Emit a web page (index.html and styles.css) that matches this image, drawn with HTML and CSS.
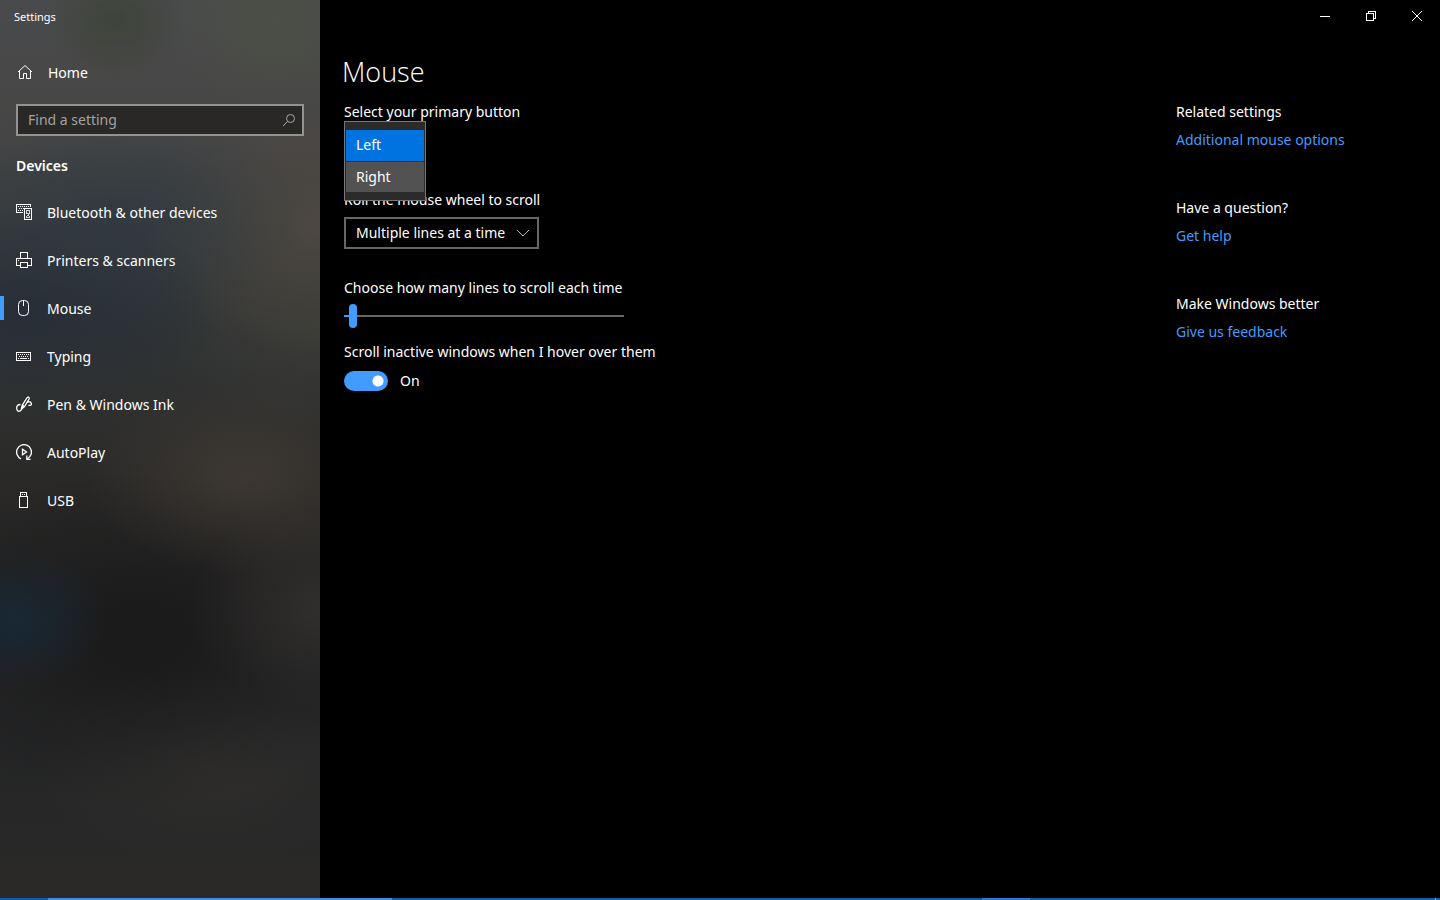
FILE: index.html
```html
<!DOCTYPE html>
<html lang="en">
<head>
<meta charset="utf-8">
<title>Settings</title>
<link rel="stylesheet" href="styles.css">
</head>
<body>
<div class="window">
  <div class="sidebar">
    <header class="app-title">Settings</header>
    <a class="nav-item home" href="#home">
      <svg class="icon" width="16" height="16" viewBox="0 0 16 16"><path d="M1 8 8 1.500 15 8M2.500 7v7.500h4v-5h3v5h4V7"/></svg>
      <span>Home</span>
    </a>
    <form class="search">
      <input class="search-input" type="text" placeholder="Find a setting" aria-label="Find a setting">
      <button class="search-button" type="button" aria-label="Search">
        <svg width="14" height="14" viewBox="0 0 14 14"><circle cx="8.500" cy="5.500" r="4"/><path d="M5.500 8.500 1 13"/></svg>
      </button>
    </form>
    <h2 class="section-title">Devices</h2>
    <nav class="nav">
      <a class="nav-item" href="#bluetooth">
        <svg class="icon crisp" width="16" height="16" viewBox="0 0 16 16"><path d="M7 8.500H.5v-8h14V3M8.500 4.500h7v11h-7z"/><path d="M2 2.500h11M3 4.500h5M2 6.500h1M4 6.500h3" stroke-dasharray="1 1"/><path d="M10.500 6.500h3v3h-3zM11 11.500h2M10.500 12v2M13.500 12v2M11 13.500h2M12 10v1" opacity=".8"/></svg>
        <span>Bluetooth &amp; other devices</span>
      </a>
      <a class="nav-item" href="#printers">
        <svg class="icon crisp" width="16" height="16" viewBox="0 0 16 16"><path d="M4.500 6V.5h7V6M4.500 13.500h-4v-7h15v7h-4M4.500 10.500h7v5h-7zM2 8.500h1"/></svg>
        <span>Printers &amp; scanners</span>
      </a>
      <a class="nav-item current" href="#mouse" aria-current="page">
        <svg class="icon" width="16" height="16" viewBox="0 0 16 16"><rect x="2.500" y=".5" width="10" height="15" rx="4"/><path d="M7.500 1v5"/></svg>
        <span>Mouse</span>
      </a>
      <a class="nav-item" href="#typing">
        <svg class="icon crisp" width="16" height="16" viewBox="0 0 16 16"><path d="M.5 4.500h14v8H.5zM4 10.500h7M2 10.500h1M12 10.500h1"/><path d="M2 6.500h11M3 8.500h10" stroke-dasharray="1 1"/></svg>
        <span>Typing</span>
      </a>
      <a class="nav-item" href="#pen">
        <svg class="icon bold" width="16" height="16" viewBox="0 0 16 16"><path d="M4.500 8.500C2 8.300.5 10 .7 12.500c.1 2 1.300 3 2.800 2.700C6 14.800 6 12 7.500 9M5.300 13.300l.9-4L10.800 2C11.800.5 13.800 1 13 3L8.500 10.500zM11 6.500c2-1.300 4.300-.5 4.400 1.300.1 1.700-1.900 2-2.900 1.200"/></svg>
        <span>Pen &amp; Windows Ink</span>
      </a>
      <a class="nav-item" href="#autoplay">
        <svg class="icon bold" width="16" height="16" viewBox="0 0 16 16"><path d="M5 14.800A7.400 7.400 0 1 1 15 10.500C14.300 12.500 13 13.800 11 15M10.800 11.500V15.300H14.500M6.500 5.200v5.600l4-2.800z"/></svg>
        <span>AutoPlay</span>
      </a>
      <a class="nav-item" href="#usb">
        <svg class="icon crisp" width="16" height="16" viewBox="0 0 16 16"><path d="M3.500 4.500h8v11h-8zM4.500 4V.5h6V4M6 2.500h1M8 2.500h1"/></svg>
        <span>USB</span>
      </a>
    </nav>
  </div>
  <div class="page">
    <div class="caption-buttons">
      <button type="button" aria-label="Minimize"><svg class="crisp" width="10" height="10" viewBox="0 0 10 10"><path d="M0 5.500h10"/></svg></button>
      <button type="button" aria-label="Restore"><svg class="crisp" width="10" height="10" viewBox="0 0 10 10"><path d="M.5 2.500h7v7h-7zM2.500 2V.5h7v7H8"/></svg></button>
      <button type="button" aria-label="Close"><svg width="10" height="10" viewBox="0 0 10 10"><path d="M0 0 10 10M10 0 0 10"/></svg></button>
    </div>
    <h1 class="page-title">Mouse</h1>
    <div class="columns">
      <main class="settings">
        <div class="field">
          <span id="primary-label">Select your primary button</span>
          <div class="picker">
            <div class="picker-list" role="listbox" aria-labelledby="primary-label">
              <button class="option selected" type="button" role="option" aria-selected="true">Left</button>
              <button class="option" type="button" role="option" aria-selected="false">Right</button>
            </div>
          </div>
        </div>
        <div class="field">
          <label for="wheel">Roll the mouse wheel to scroll</label>
          <div class="select-box">
            <select id="wheel"><option>Multiple lines at a time</option><option>One screen at a time</option></select>
            <svg class="chevron" width="12" height="8" viewBox="0 0 12 8"><path d="M0 1 6 7l6-6"/></svg>
          </div>
        </div>
        <div class="field compact">
          <label for="lines">Choose how many lines to scroll each time</label>
          <input id="lines" class="slider" type="range" min="1" max="100" value="3">
        </div>
        <div class="field">
          <label for="inactive">Scroll inactive windows when I hover over them</label>
          <div class="toggle-row">
            <input id="inactive" class="toggle" type="checkbox" role="switch" checked>
            <span>On</span>
          </div>
        </div>
      </main>
      <aside class="related">
        <section><h3>Related settings</h3><a href="#options">Additional mouse options</a></section>
        <section><h3>Have a question?</h3><a href="#help">Get help</a></section>
        <section><h3>Make Windows better</h3><a href="#feedback">Give us feedback</a></section>
      </aside>
    </div>
  </div>
</div>
<div class="taskbar-edge"></div>
</body>
</html>
```
FILE: styles.css
```css
* { box-sizing: border-box; }

body {
  margin: 0;
  min-height: 100vh;
  display: flex;
  flex-direction: column;
  background: #000;
  color: #fff;
  font: 14px/20px "Noto Sans", "Open Sans", sans-serif;
}

a { color: #429cff; text-decoration: none; }
h1, h2, h3 { margin: 0; font-size: inherit; font-weight: 400; }
button, input, select { margin: 0; font: inherit; color: inherit; }
svg { display: block; fill: none; stroke: currentColor; }
.crisp { shape-rendering: crispEdges; }
.bold { stroke-width: 1.3; }

.window { flex: 1; display: flex; }

.sidebar {
  width: 320px;
  flex: none;
  background:
    radial-gradient(70px 60px at 115px 20px, #39412fa0, #39412f00),
    radial-gradient(110px 90px at 275px 20px, #4f554180, #4f554100),
    radial-gradient(200px 120px at 110px 215px, #2b394390, #2b394300),
    radial-gradient(170px 130px at 310px 225px, #544d44b0, #544d4400),
    radial-gradient(200px 100px at 30px 310px, #222b38c0, #222b3800),
    radial-gradient(150px 100px at 320px 330px, #3e3e38a0, #3e3e3800),
    radial-gradient(160px 100px at 245px 475px, #453e37b0, #453e3700),
    radial-gradient(90px 70px at 15px 618px, #182a38e0, #182a3800),
    radial-gradient(130px 100px at 320px 610px, #383532b0, #38353200),
    radial-gradient(230px 170px at 140px 640px, #181717c0, #18171700),
    radial-gradient(180px 100px at 210px 765px, #343230b0, #34323000),
    linear-gradient(#494a4c, #474645 16%, #3a3b3b 25%, #313333 40%, #292827 55%, #222223 68%, #242526 82%, #2a2928);
}

.app-title { padding: 7px 14px 5px; font-size: 11px; }

.nav-item {
  display: flex;
  align-items: center;
  gap: 15px;
  height: 48px;
  padding: 0 16px;
  color: #fff;
}
.icon { margin-bottom: 2px; }
.home { margin: 17px 0 7px; padding-left: 17px; }
.current { background: linear-gradient(#429cff, #429cff) 0 11px / 4px 24px no-repeat; }

.search {
  display: flex;
  height: 32px;
  margin: 0 16px;
  border: 2px solid #939392;
  background: #292827;
}
.search-input {
  flex: 1;
  min-width: 0;
  padding: 0 10px;
  border: 0;
  outline: 0;
  background: none;
}
.search-input::placeholder { color: #a3a2a1; opacity: 1; }
.search-button { padding: 0 6px; border: 0; background: none; color: #a8a7a6; }
.section-title { margin: 20px 16px 13px; font-weight: 600; }

.page { flex: 1; display: flex; flex-direction: column; }
.caption-buttons { display: flex; justify-content: flex-end; height: 32px; }
.caption-buttons button {
  display: grid;
  place-items: center;
  width: 46px;
  padding: 0;
  border: 0;
  background: none;
}
.page-title {
  padding: 22px 22px 12px;
  font: 300 27px/36px "Open Sans", "Noto Sans", sans-serif;
}
.columns { display: flex; justify-content: space-between; padding-left: 24px; }

.settings { display: flex; flex-direction: column; }
.field { display: flex; flex-direction: column; align-items: flex-start; gap: 7px; margin-bottom: 29px; }
.compact { margin-bottom: 15px; }

.picker { position: relative; width: 82px; height: 32px; }
.picker-list {
  position: absolute;
  top: -8px;
  left: 0;
  width: 82px;
  height: 80px;
  padding: 8px 1px;
  border: 1px solid #767676;
  background: #2b2b2b;
  display: flex;
  flex-direction: column;
  gap: 1px;
}
.option { height: 31px; padding: 0 10px; border: 0; background: #525252; text-align: left; }
.option.selected { background: #0173e0; }

.select-box { position: relative; }
.select-box select {
  appearance: none;
  width: 195px;
  height: 32px;
  padding: 0 10px;
  border: 2px solid #666;
  border-radius: 0;
  background: #000;
}
.chevron { position: absolute; right: 10px; top: 12px; color: #bbb; pointer-events: none; }

.slider {
  appearance: none;
  width: 280px;
  height: 22px;
  background: linear-gradient(90deg, #429cff 8px, #666 8px) 0 50% / 100% 2px no-repeat;
}
.slider::-webkit-slider-thumb {
  appearance: none;
  width: 8px;
  height: 24px;
  border-radius: 4px;
  background: #429cff;
}

.toggle-row { display: flex; align-items: center; gap: 12px; height: 24px; }
.toggle {
  appearance: none;
  width: 44px;
  height: 20px;
  border-radius: 10px;
  background: radial-gradient(circle at 34px 10px, #fff 5px, #429cff 6px);
}

.related { width: 264px; display: flex; flex-direction: column; gap: 48px; }
.related section { display: flex; flex-direction: column; align-items: flex-start; gap: 8px; }

.taskbar-edge {
  height: 2px;
  background:
    linear-gradient(#3b8ee5, #3b8ee5) 48px 0 / 344px 2px no-repeat,
    linear-gradient(#2b7bd6, #2b7bd6) 982px 0 / 48px 2px no-repeat,
    linear-gradient(#7fb2e6, #7fb2e6) right 4px top 0 / 1px 2px no-repeat,
    #105fae;
}
```
